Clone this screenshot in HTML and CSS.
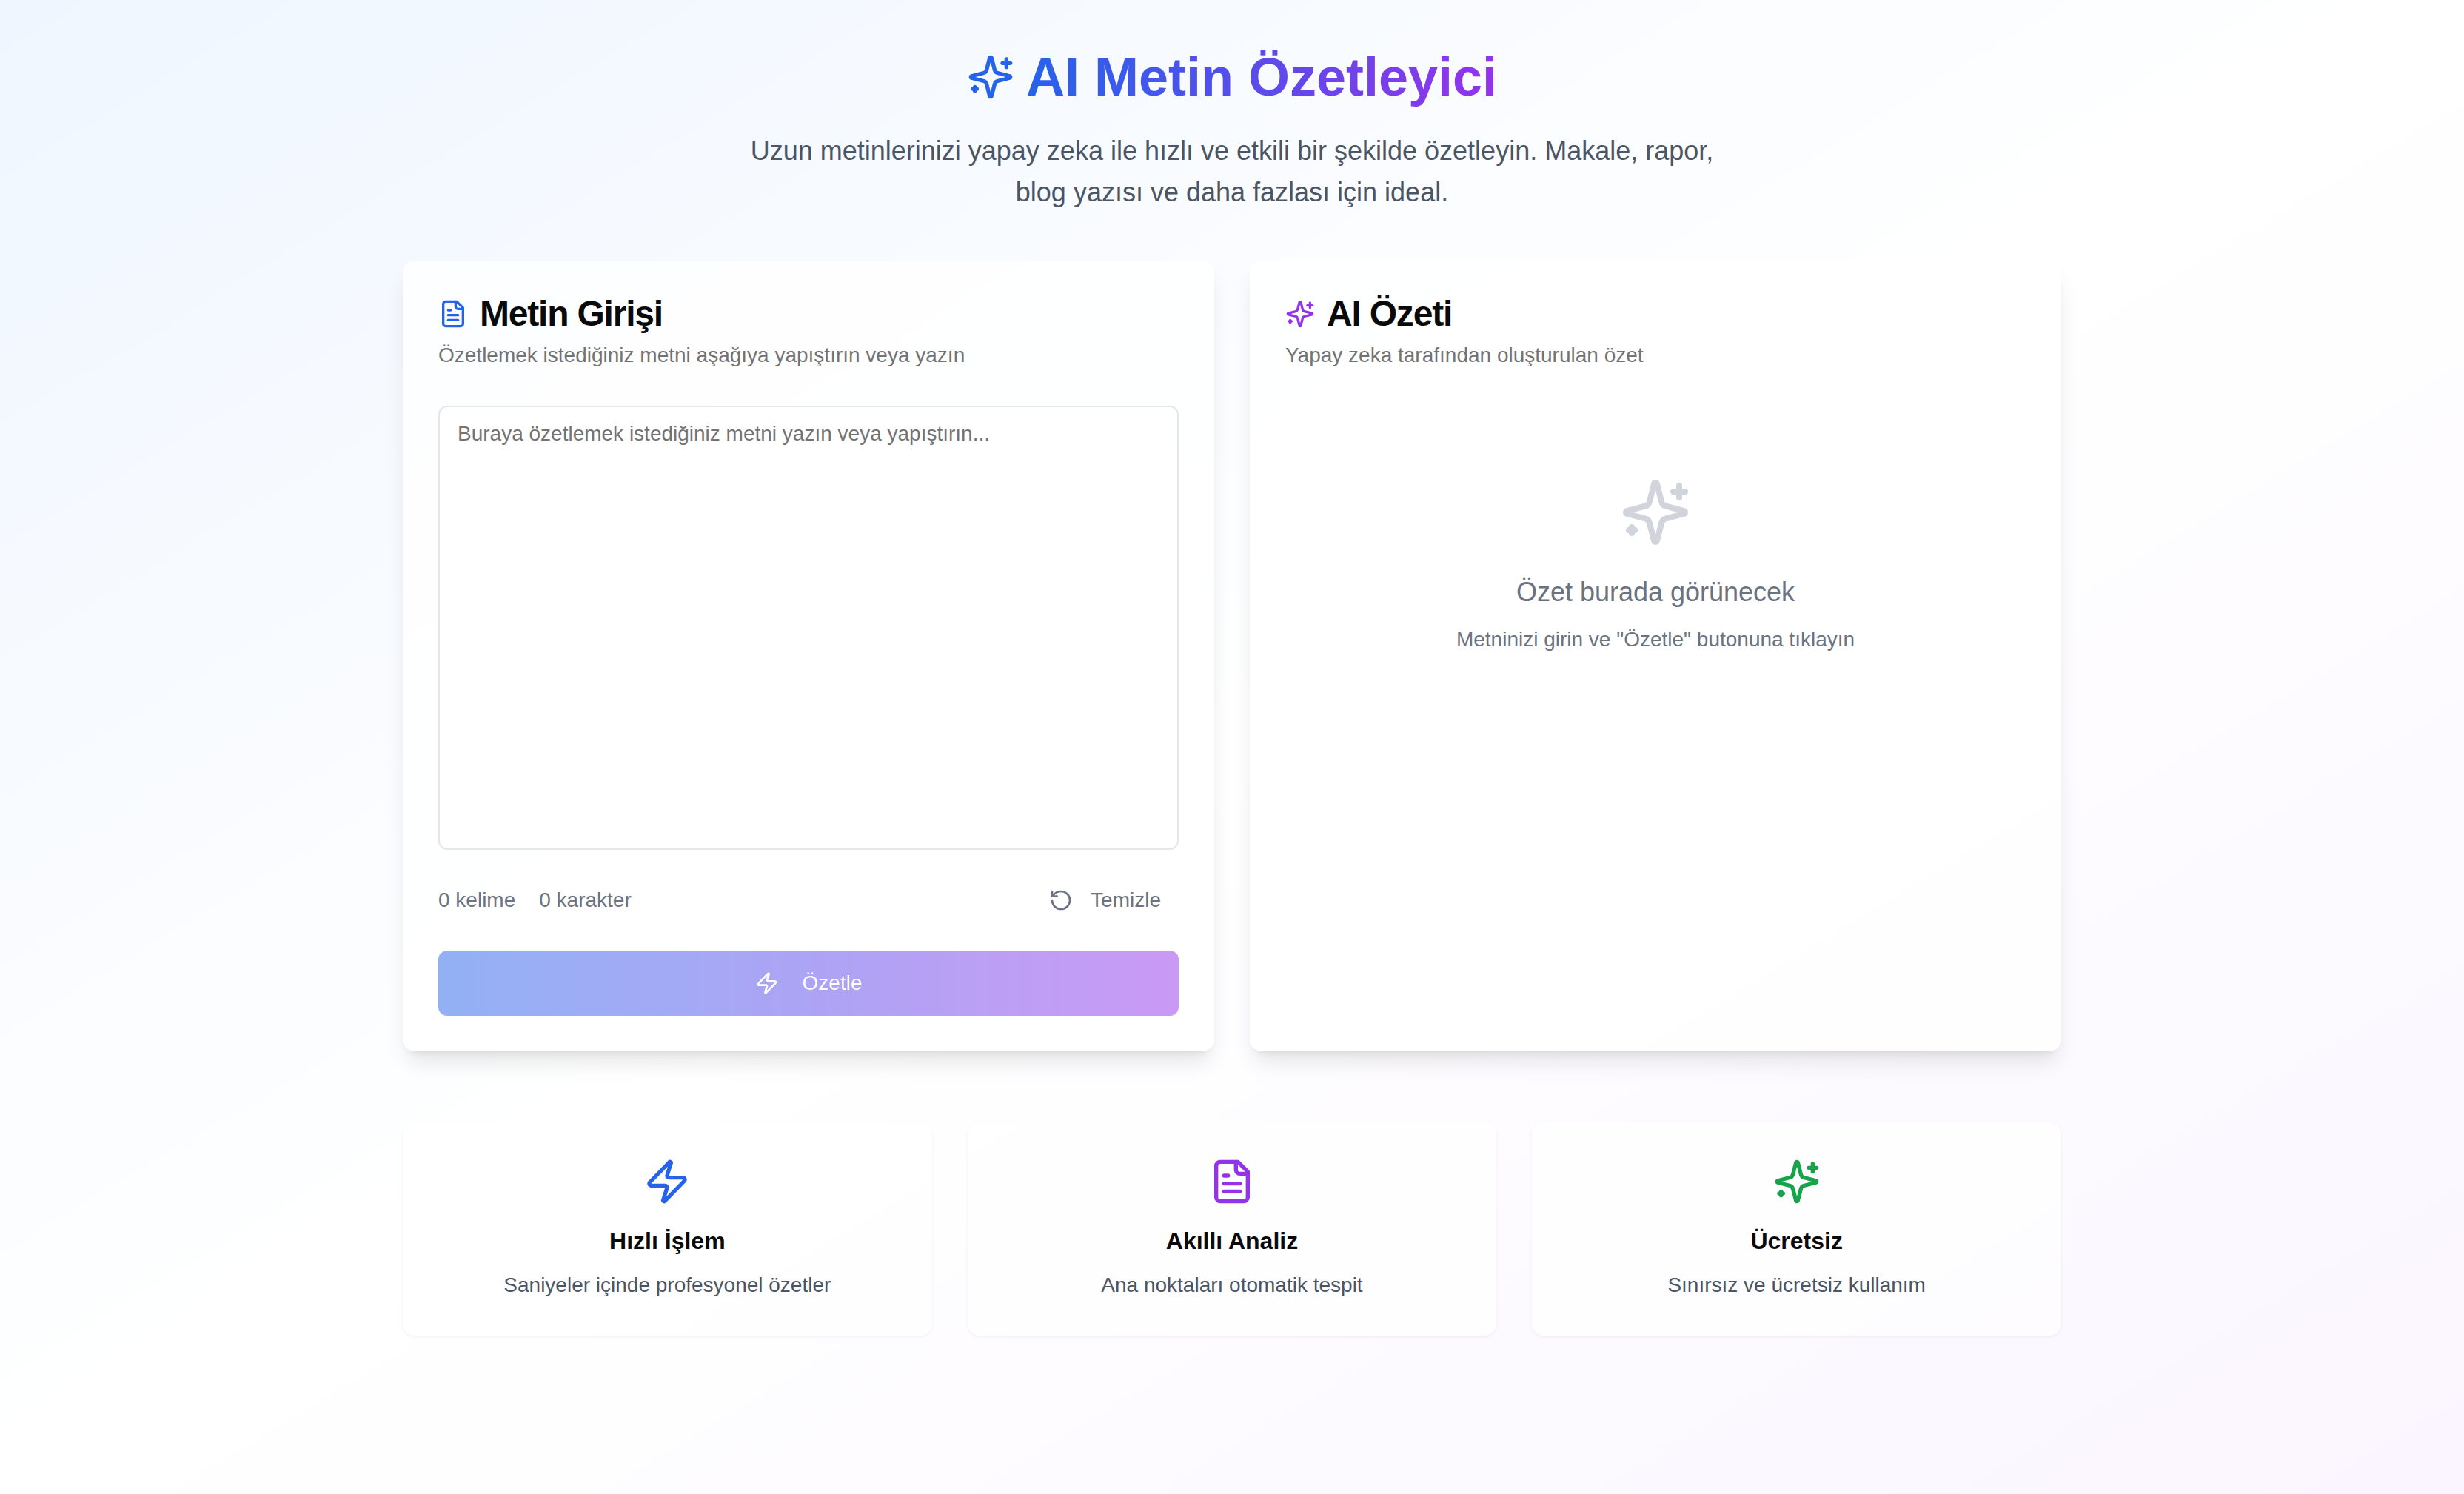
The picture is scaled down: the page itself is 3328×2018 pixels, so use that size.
FILE: index.html
```html
<!DOCTYPE html>
<html lang="tr">
<head>
  <meta charset="utf-8">
  <meta name="viewport" content="width=device-width, initial-scale=1">
  <title>AI Metin Özetleyici</title>
  <link rel="stylesheet" href="styles.css">
</head>
<body>
  <svg class="sprite" aria-hidden="true">
    <symbol id="sparkles" viewBox="0 0 24 24">
      <path d="M9.937 15.5A2 2 0 0 0 8.5 14.063l-6.135-1.582a.5.5 0 0 1 0-.962L8.5 9.936A2 2 0 0 0 9.937 8.5l1.582-6.135a.5.5 0 0 1 .963 0L14.063 8.5A2 2 0 0 0 15.5 9.937l6.135 1.581a.5.5 0 0 1 0 .964L15.5 14.063a2 2 0 0 0-1.437 1.437l-1.582 6.135a.5.5 0 0 1-.963 0z"/>
      <path d="M20 3v4"/>
      <path d="M22 5h-4"/>
      <path d="M4 17v2"/>
      <path d="M5 18H3"/>
    </symbol>
    <symbol id="file-text" viewBox="0 0 24 24">
      <path d="M15 2H6a2 2 0 0 0-2 2v16a2 2 0 0 0 2 2h12a2 2 0 0 0 2-2V7Z"/>
      <path d="M14 2v4a2 2 0 0 0 2 2h4"/>
      <path d="M10 9H8"/>
      <path d="M16 13H8"/>
      <path d="M16 17H8"/>
    </symbol>
    <symbol id="zap" viewBox="0 0 24 24">
      <path d="M4 14a1 1 0 0 1-.78-1.63l9.9-10.2a.5.5 0 0 1 .86.46l-1.92 6.02A1 1 0 0 0 13 10h7a1 1 0 0 1 .78 1.63l-9.9 10.2a.5.5 0 0 1-.86-.46l1.92-6.02A1 1 0 0 0 11 14z"/>
    </symbol>
    <symbol id="rotate-ccw" viewBox="0 0 24 24">
      <path d="M3 12a9 9 0 1 0 9-9 9.75 9.75 0 0 0-6.74 2.74L3 8"/>
      <path d="M3 3v5h5"/>
    </symbol>
  </svg>

  <div class="container">
    <header class="hero">
      <h1 class="hero-title">
        <svg class="icon icon-lg blue" aria-hidden="true"><use href="#sparkles"/></svg>
        <span class="gradient-text">AI Metin Özetleyici</span>
      </h1>
      <p class="hero-text">Uzun metinlerinizi yapay zeka ile hızlı ve etkili bir şekilde özetleyin. Makale, rapor, blog yazısı ve daha fazlası için ideal.</p>
    </header>

    <main>
      <div class="panels">
        <section class="card panel">
          <div class="panel-header">
            <h2 class="panel-title">
              <svg class="icon icon-md blue" aria-hidden="true"><use href="#file-text"/></svg>
              <label for="source">Metin Girişi</label>
            </h2>
            <p class="panel-description">Özetlemek istediğiniz metni aşağıya yapıştırın veya yazın</p>
          </div>
          <form class="panel-form">
            <textarea class="source" id="source" placeholder="Buraya özetlemek istediğiniz metni yazın veya yapıştırın..."></textarea>
            <div class="toolbar">
              <div class="stats">
                <span>0 kelime</span>
                <span>0 karakter</span>
              </div>
              <button class="button-clear" type="reset">
                <svg class="icon icon-sm" aria-hidden="true"><use href="#rotate-ccw"/></svg>
                Temizle
              </button>
            </div>
            <button class="button-submit" type="submit" disabled>
              <svg class="icon icon-sm" aria-hidden="true"><use href="#zap"/></svg>
              Özetle
            </button>
          </form>
        </section>

        <section class="card panel">
          <div class="panel-header">
            <h2 class="panel-title">
              <svg class="icon icon-md purple" aria-hidden="true"><use href="#sparkles"/></svg>
              AI Özeti
            </h2>
            <p class="panel-description">Yapay zeka tarafından oluşturulan özet</p>
          </div>
          <div class="empty">
            <svg class="icon icon-xl pale" aria-hidden="true"><use href="#sparkles"/></svg>
            <p class="empty-title">Özet burada görünecek</p>
            <p class="empty-text">Metninizi girin ve "Özetle" butonuna tıklayın</p>
          </div>
        </section>
      </div>

      <div class="features">
        <article class="card feature">
          <svg class="icon icon-lg blue" aria-hidden="true"><use href="#zap"/></svg>
          <h3 class="feature-title">Hızlı İşlem</h3>
          <p class="feature-text">Saniyeler içinde profesyonel özetler</p>
        </article>
        <article class="card feature">
          <svg class="icon icon-lg purple" aria-hidden="true"><use href="#file-text"/></svg>
          <h3 class="feature-title">Akıllı Analiz</h3>
          <p class="feature-text">Ana noktaları otomatik tespit</p>
        </article>
        <article class="card feature">
          <svg class="icon icon-lg green" aria-hidden="true"><use href="#sparkles"/></svg>
          <h3 class="feature-title">Ücretsiz</h3>
          <p class="feature-text">Sınırsız ve ücretsiz kullanım</p>
        </article>
      </div>
    </main>
  </div>
</body>
</html>
```
FILE: styles.css
```css
* {
  box-sizing: border-box;
}

body {
  min-height: 100vh;
  margin: 0;
  background: linear-gradient(to bottom right, #eff6ff, #ffffff, #faf5ff);
  color: #0a0a0a;
  font-family: "Liberation Sans", Arial, sans-serif;
  font-size: 28px;
  line-height: 40px;
}

h1,
h2,
h3,
p {
  margin: 0;
}

button,
textarea {
  font: inherit;
}

.sprite {
  display: none;
}

.container {
  max-width: 2304px;
  margin: 0 auto;
  padding: 64px 32px;
}

/* Icons */
.icon {
  flex-shrink: 0;
  fill: none;
  stroke: currentColor;
  stroke-width: 2;
  stroke-linecap: round;
  stroke-linejoin: round;
}

.icon-sm {
  width: 32px;
  height: 32px;
}

.icon-md {
  width: 40px;
  height: 40px;
}

.icon-lg {
  width: 64px;
  height: 64px;
}

.icon-xl {
  width: 96px;
  height: 96px;
}

.blue {
  color: #2563eb;
}

.purple {
  color: #9333ea;
}

.green {
  color: #16a34a;
}

.pale {
  color: #d1d5db;
}

/* Header */
.hero {
  display: flex;
  flex-direction: column;
  align-items: center;
  gap: 32px;
  margin-bottom: 64px;
  text-align: center;
}

.hero-title {
  display: flex;
  align-items: center;
  gap: 16px;
  font-size: 72px;
  line-height: 80px;
}

.gradient-text {
  background: linear-gradient(to right, #2563eb, #9333ea);
  background-clip: text;
  -webkit-background-clip: text;
  color: transparent;
}

.hero-text {
  max-width: 1344px;
  color: #4b5563;
  font-size: 36px;
  line-height: 56px;
}

/* Cards */
.card {
  padding: 48px;
  border-radius: 16px;
}

.panels {
  display: grid;
  grid-template-columns: repeat(2, 1fr);
  gap: 48px;
}

.panel {
  background: rgb(255 255 255 / 80%);
  box-shadow: 0 20px 30px -6px rgb(0 0 0 / 10%), 0 8px 12px -8px rgb(0 0 0 / 10%);
}

.panel-header {
  display: flex;
  flex-direction: column;
  gap: 12px;
  margin-bottom: 48px;
}

.panel-title {
  display: flex;
  align-items: center;
  gap: 16px;
  font-size: 48px;
  line-height: 48px;
  letter-spacing: -0.025em;
}

.panel-description {
  color: #737373;
}

.panel-form {
  display: flex;
  flex-direction: column;
  gap: 32px;
}

.source {
  display: block;
  width: 100%;
  min-height: 600px;
  padding: 16px 24px;
  border: 2px solid #e5e7eb;
  border-radius: 12px;
  background: #ffffff;
  color: #0a0a0a;
  resize: none;
}

.source::placeholder {
  color: #737373;
  opacity: 1;
}

.toolbar {
  display: flex;
  align-items: center;
  justify-content: space-between;
  color: #6b7280;
}

.stats {
  display: flex;
  gap: 32px;
}

.button-clear,
.button-submit {
  display: flex;
  align-items: center;
  justify-content: center;
  border: 0;
  border-radius: 12px;
}

.button-clear {
  gap: 24px;
  padding: 16px 24px;
  background: transparent;
  color: inherit;
}

.button-submit {
  gap: 32px;
  padding: 24px 64px;
  background: linear-gradient(to right, #2563eb, #9333ea);
  color: #ffffff;
  opacity: 0.5;
}

.empty {
  display: flex;
  flex-direction: column;
  align-items: center;
  padding: 96px 0;
  color: #6b7280;
  text-align: center;
}

.empty-title {
  margin: 32px 0 16px;
  font-size: 36px;
  line-height: 56px;
}

/* Features */
.features {
  display: grid;
  grid-template-columns: repeat(3, 1fr);
  gap: 48px;
  margin-top: 96px;
}

.feature {
  display: flex;
  flex-direction: column;
  align-items: center;
  background: rgb(255 255 255 / 60%);
  box-shadow: 0 2px 4px rgb(0 0 0 / 5%);
  text-align: center;
}

.feature-title {
  margin: 24px 0 16px;
  font-size: 32px;
  line-height: 48px;
}

.feature-text {
  color: #4b5563;
}
```
